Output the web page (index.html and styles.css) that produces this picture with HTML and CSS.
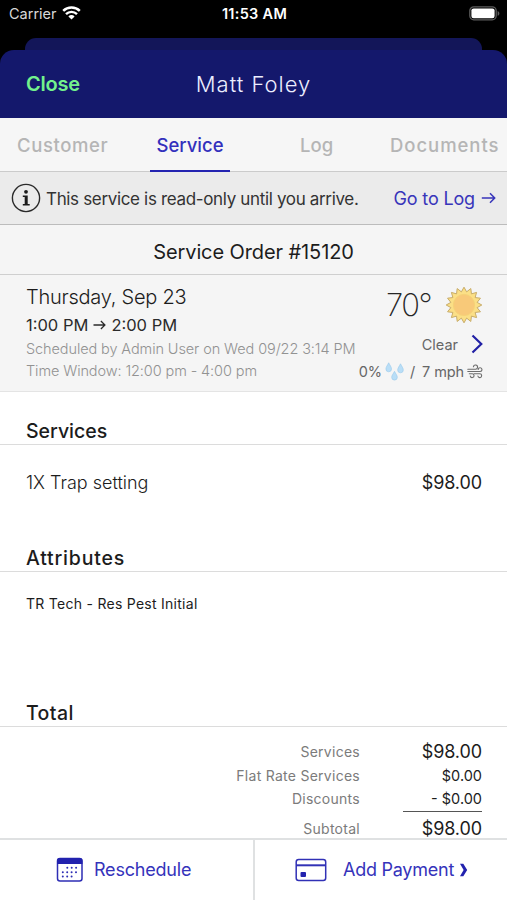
FILE: index.html
```
<!DOCTYPE html>
<html lang="en">
<head>
    <meta charset="UTF-8">
    <meta name="viewport" content="width=device-width, initial-scale=1.0">
    <title>Service Order</title>
    <link rel="stylesheet" href="styles.css">
</head>
<body>

    <div class="screen">
        <div class="top">
            <div class="status-bar">
                <div class="carrier">
                    <span class="carrier-name">Carrier</span>
                    <svg class="wifi" width="19" height="14" viewBox="0 0 19 14">
                        <path d="M1.2 4.9a11.8 11.8 0 0 1 16.6 0" fill="none" stroke="#fff" stroke-width="2.5"/>
                        <path d="M4 8.1a7.8 7.8 0 0 1 11 0" fill="none" stroke="#fff" stroke-width="2.4"/>
                        <path d="M6.4 10.4a4.4 4.4 0 0 1 6.2 0L9.5 13.6z" fill="#fff"/>
                    </svg>
                </div>
                <span class="clock">11:53 AM</span>
                <svg class="battery" width="31" height="15" viewBox="0 0 31 15">
                    <rect x="0.8" y="0.8" width="26.4" height="13" rx="4" fill="none" stroke="#5c5c5c" stroke-width="1.3"/>
                    <rect x="2.4" y="2.4" width="23.2" height="9.8" rx="2.2" fill="#fff"/>
                    <path d="M28.6 5v4.8c1.1-.5 1.8-1.3 1.8-2.4s-.7-1.9-1.8-2.4z" fill="#5c5c5c"/>
                </svg>
            </div>
            <div class="back-card"></div>
            <header class="header">
                <a class="close">Close</a>
                <h1>Matt Foley</h1>
            </header>
        </div>

        <nav class="tabs">
            <a class="tab customer">Customer</a>
            <a class="tab active">Service</a>
            <a class="tab log">Log</a>
            <a class="tab documents">Documents</a>
        </nav>

        <div class="notice">
            <svg class="info" width="30" height="30" viewBox="0 0 30 30">
                <circle cx="15" cy="15" r="13.6" fill="none" stroke="#2a2a2a" stroke-width="1.4"/>
                <circle cx="15" cy="8.8" r="1.9" fill="#1c1c1c"/>
                <path d="M11.8 12.4h4.9v8.5h2v1.6h-6.9v-1.600h1.900v-6.900h-1.900z" fill="#1c1c1c"/>
            </svg>
            <span class="notice-text">This service is read-only until you arrive.</span>
            <a class="notice-link"><span>Go to Log</span>
                <svg width="15" height="12" viewBox="0 0 15 12">
                    <path d="M.8 6h12.8M9 1.3 13.7 6 9 10.7" fill="none" stroke="#3835ba" stroke-width="1.5"/>
                </svg>
            </a>
        </div>

        <div class="order"><span>Service Order #15120</span></div>

        <div class="schedule">
            <div class="when">
                <div class="date">Thursday, Sep 23</div>
                <div class="time"><span>1:00 PM</span>
                    <svg width="13" height="10" viewBox="0 0 13 10">
                        <path d="M.5 5h11.3M7.9 1 11.9 5 7.9 9" fill="none" stroke="#2b2b2b" stroke-width="1.3"/>
                    </svg>
                    <span>2:00 PM</span>
                </div>
                <div class="meta">Scheduled by Admin User on Wed 09/22 3:14 PM</div>
                <div class="meta">Time Window: 12:00 pm - 4:00 pm</div>
            </div>
            <div class="weather">
                <div class="temp">
                    <span class="degrees">70°</span>
                    <svg width="38" height="38" viewBox="-19 -19 38 38">
                        <path id="sun" fill="#fbdf86" stroke="#c8ac68" stroke-width="1" stroke-linejoin="round"/>
                        <circle r="10.6" fill="#f8c979" stroke="#f6d277" stroke-width="1"/>
                    </svg>
                </div>
                <div class="sky">
                    <span>Clear</span>
                    <svg width="12" height="20" viewBox="0 0 12 20">
                        <path d="M1.5 1.5 10.3 10 1.5 18.5" fill="none" stroke="#2221a5" stroke-width="2.2"/>
                    </svg>
                </div>
                <div class="wind">
                    <span>0%</span>
                    <svg class="drops" width="21" height="19" viewBox="0 0 21 19">
                        <g fill="#b9def7" stroke="#98caeb" stroke-width=".6">
                            <path d="M4.7.8C6 3.5 7.500 5 7.500 7a2.800 2.800 0 0 1-5.600 0C1.900 5 3.400 3.500 4.700.8z"/>
                            <path d="M16.500 1.800c1.300 2.700 2.800 4.200 2.800 6.200a2.800 2.800 0 0 1-5.600 0c0-2 1.500-3.500 2.800-6.200z"/>
                            <path d="M10.500 9.300c1.300 2.700 2.800 4 2.800 6a2.800 2.800 0 0 1-5.600 0c0-2 1.500-3.300 2.800-6z"/>
                        </g>
                    </svg>
                    <span class="slash">/</span>
                    <span>7 mph</span>
                    <svg class="gust" width="16" height="15" viewBox="0 0 16 15">
                        <g fill="none" stroke="#6c6c6c" stroke-width="1.1" stroke-linecap="round">
                            <path d="M.8 5.200h7.700a2.100 2.100 0 1 0-2.100-2.400"/>
                            <path d="M.8 7.500h12.300a1.900 1.900 0 1 0-1.900-2"/>
                            <path d="M2.300 9.800h2.800a1.900 1.900 0 1 1-1.800 2.300"/>
                            <path d="M7.200 9.800h5.600a1.900 1.900 0 1 1-1.900 2.200"/>
                        </g>
                    </svg>
                </div>
            </div>
        </div>

        <main class="content">
            <section class="services">
                <h2>Services</h2>
                <div class="line">
                    <span class="item">1X Trap setting</span>
                    <span class="price">$98.00</span>
                </div>
            </section>

            <section class="attributes">
                <h2>Attributes</h2>
                <p>TR Tech - Res Pest Initial</p>
            </section>

            <section class="total">
                <h2>Total</h2>
                <div class="row first">
                    <span class="label">Services</span>
                    <span class="price">$98.00</span>
                </div>
                <div class="row">
                    <span class="label">Flat Rate Services</span>
                    <span class="amount">$0.00</span>
                </div>
                <div class="row">
                    <span class="label">Discounts</span>
                    <span class="amount">- $0.00</span>
                </div>
                <div class="sum-line"></div>
                <div class="row subtotal">
                    <span class="label">Subtotal</span>
                    <span class="price">$98.00</span>
                </div>
            </section>
        </main>

        <footer class="actions">
            <a class="action reschedule">
                <svg width="28" height="26" viewBox="0 0 28 26">
                    <rect x="1.5" y="1.5" width="24.5" height="22.5" rx="2.5" fill="none" stroke="#2e2eb5" stroke-width="1.5"/>
                    <path d="M1 7V4a3 3 0 0 1 3-3h19.500a3 3 0 0 1 3 3v3z" fill="#2222ae"/>
                    <path d="M11.300 10.800h11.500M6.800 15.200h16M6.800 19.400h11.500" fill="none" stroke="#2e2eb5" stroke-width="2" stroke-linecap="round" stroke-dasharray="0 4.4"/>
                </svg>
                <span>Reschedule</span>
            </a>
            <a class="action payment">
                <svg class="card" width="32" height="24" viewBox="0 0 32 24">
                    <rect x="1.2" y="1.5" width="29.5" height="21" rx="2.5" fill="none" stroke="#3131b6" stroke-width="1.5"/>
                    <path d="M1 7.300h30" stroke="#3131b6" stroke-width="2"/>
                    <rect x="5.5" y="14" width="5.5" height="5" rx="1" fill="#2222ae"/>
                </svg>
                <span>Add Payment</span>
                <svg class="more" width="9" height="14" viewBox="0 0 9 14">
                    <path d="M1 .8h3.300L8.200 7l-3.900 6.200H1L4.600 7z" fill="#2222ae"/>
                </svg>
            </a>
        </footer>
    </div>

    <script>
        // 16 pointed star around the sun disc
        let points = [];
        for (let i = 0; i < 32; i++) {
            let r = i % 2 ? 13.4 : 17.8;
            let a = i * Math.PI / 16;
            points.push((r * Math.sin(a)).toFixed(2) + ' ' + (-r * Math.cos(a)).toFixed(2));
        }
        document.getElementById('sun').setAttribute('d', 'M' + points.join('L') + 'Z');
    </script>

</body>
</html>
```
FILE: styles.css
```
* {
    box-sizing: border-box;
}
body {
    margin: 0;
    font-family: Inter, "Liberation Sans", sans-serif;
    background-color: #ffffff;
    color: #1c1c1c;
}
h1, h2, p {
    margin: 0;
}
svg {
    display: block;
    flex: none;
}
span, a {
    white-space: nowrap;
}
.screen {
    width: 507px;
    height: 900px;
    display: flex;
    flex-direction: column;
    overflow: hidden;
}
.top {
    background-color: #000000;
    flex: none;
}
.status-bar {
    height: 38px;
    padding: 0 7px 11px 9px;
    display: grid;
    grid-template-columns: 1fr auto 1fr;
    align-items: center;
    color: #ffffff;
}
.carrier {
    display: flex;
    align-items: center;
    gap: 5px;
    font-size: 14.5px;
    color: #d8d8d8;
}
.wifi {
    margin-top: -2px;
}
.clock {
    font-size: 14.5px;
    font-weight: 600;
    letter-spacing: 0.3px;
}
.battery {
    justify-self: end;
    margin-top: -1px;
}
.back-card {
    height: 12px;
    margin: 0 25px;
    background-color: #131659;
    border-radius: 11px 11px 0 0;
}
.header {
    height: 68px;
    padding: 0 26px;
    display: grid;
    grid-template-columns: 1fr auto 1fr;
    align-items: center;
    background-color: #14186c;
    border-radius: 14px 14px 0 0;
}
.close {
    font-size: 20px;
    font-weight: 600;
    letter-spacing: -0.2px;
    color: #73f28c;
}
.header h1 {
    font-size: 22px;
    font-weight: 300;
    letter-spacing: 1px;
    color: #eceeff;
}
.tabs {
    height: 54px;
    flex: none;
    display: flex;
    padding-left: 17px;
    background-color: #f6f6f6;
    border-bottom: 1px solid #cbcbcb;
}
.tab {
    height: 54px;
    line-height: 55px;
    font-size: 18.5px;
    font-weight: 500;
    letter-spacing: 0.6px;
    color: #b5b5b5;
}
.customer {
    width: 133px;
}
.active {
    width: 80px;
    text-align: center;
    letter-spacing: 0;
    color: #3330bd;
    border-bottom: 2px solid #2424b1;
}
.log {
    width: 160px;
    padding-left: 70px;
    letter-spacing: 0;
}
.documents {
    letter-spacing: 0.95px;
}
.notice {
    height: 53px;
    flex: none;
    display: flex;
    align-items: center;
    padding: 0 11px;
    background-color: #ebebeb;
    border-bottom: 1px solid #bcbcbc;
}
.notice-text {
    margin: 2px 0 0 5px;
    font-size: 17px;
    letter-spacing: -0.34px;
    color: #333333;
}
.notice-link {
    margin-left: auto;
    display: flex;
    align-items: center;
    gap: 6px;
    font-size: 18px;
    letter-spacing: -0.15px;
    color: #3835ba;
}
.order {
    height: 50px;
    flex: none;
    line-height: 54px;
    text-align: center;
    font-size: 20px;
    letter-spacing: -0.1px;
    background-color: #f5f5f5;
    border-bottom: 1px solid #cfcfcf;
}
.schedule {
    height: 117px;
    flex: none;
    display: flex;
    justify-content: space-between;
    padding: 8px 24px 0 26px;
    background-color: #f5f5f5;
    border-bottom: 1px solid #e4e4e4;
}
.date {
    height: 28px;
    line-height: 28px;
    font-size: 20px;
    font-weight: 300;
    letter-spacing: -0.25px;
}
.time {
    height: 27px;
    display: flex;
    align-items: center;
    gap: 5px;
    font-size: 16.5px;
    color: #2b2b2b;
}
.meta {
    height: 22px;
    line-height: 22px;
    font-size: 14.5px;
    font-weight: 300;
    letter-spacing: -0.1px;
    white-space: nowrap;
    color: #929292;
}
.weather {
    display: flex;
    flex-direction: column;
    align-items: flex-end;
    color: #666666;
}
.temp {
    height: 43px;
    display: flex;
    align-items: center;
    gap: 14px;
}
.degrees {
    font-size: 31px;
    font-weight: 200;
    letter-spacing: -1.5px;
    color: #262626;
}
.sky {
    height: 36px;
    display: flex;
    align-items: center;
    gap: 13px;
    font-size: 14.5px;
}
.wind {
    height: 19px;
    display: flex;
    align-items: center;
    font-size: 14.5px;
    letter-spacing: -0.1px;
}
.drops {
    margin-left: 2px;
}
.slash {
    margin: 0 7px 0 5px;
}
.gust {
    margin-left: 3px;
}
.content {
    flex: 1;
    min-height: 0;
    overflow: hidden;
}
.content h2 {
    height: 53px;
    padding: 24px 26px 0;
    line-height: 30px;
    font-size: 19.5px;
    font-weight: 500;
    border-bottom: 1px solid #dcdcdc;
}
.services {
    height: 127px;
}
.attributes {
    height: 155px;
}
.attributes h2 {
    letter-spacing: 0.8px;
}
.total h2 {
    letter-spacing: 0.4px;
}
.line {
    height: 74px;
    display: flex;
    align-items: center;
    justify-content: space-between;
    padding: 0 25px 0 26px;
}
.item {
    font-size: 18px;
    font-weight: 300;
}
.price {
    font-size: 18px;
    letter-spacing: -0.1px;
}
.attributes p {
    padding: 0 26px;
    line-height: 64px;
    font-size: 14px;
    letter-spacing: 0.27px;
}
.row {
    height: 23px;
    display: grid;
    grid-template-columns: 360px auto;
    align-items: center;
    padding-right: 25px;
    text-align: right;
}
.row.first {
    height: 25px;
    margin-top: 12px;
}
.label {
    font-size: 14px;
    letter-spacing: 0.27px;
    color: #7b7b7b;
}
.amount {
    font-size: 14.5px;
}
.sum-line {
    width: 79px;
    height: 1px;
    margin: 1px 25px 5px auto;
    background-color: #555555;
}
.actions {
    height: 62px;
    flex: none;
    display: flex;
    border-top: 2px solid #dfe1e2;
    background-color: #ffffff;
}
.action {
    display: flex;
    align-items: center;
    padding-bottom: 1px;
    font-size: 18px;
    color: #3533bb;
}
.reschedule {
    width: 255px;
    padding-left: 56px;
    gap: 10px;
    letter-spacing: -0.2px;
    border-right: 2px solid #dfe1e2;
}
.payment {
    width: 252px;
    padding-left: 40px;
    letter-spacing: -0.25px;
}
.payment span {
    margin-left: 16px;
}
.more {
    margin-left: 5px;
}
```
